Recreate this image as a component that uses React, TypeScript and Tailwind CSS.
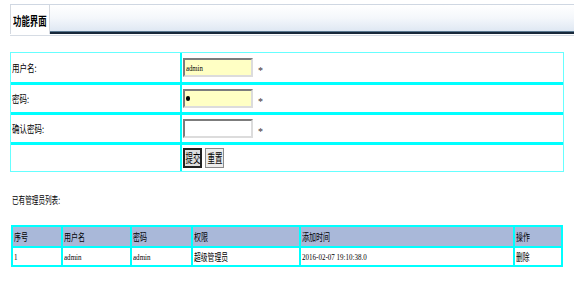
import React from 'react';

const cjk = { fontFamily: '"Noto Sans CJK SC", "Noto Sans", sans-serif' };
const serif = { fontFamily: '"Liberation Serif", "Noto Sans CJK SC", serif' };

function Sq({ children, className = '' }: { children: React.ReactNode; className?: string }) {
  return <span className={`inline-block whitespace-nowrap origin-left ${className}`}>{children}</span>;
}

function FieldInput({ value, filled, password }: { value: string; filled?: boolean; password?: boolean }) {
  return (
    <div className="flex items-end gap-[5px]">
      <div
        className={`flex h-[19px] w-[70px] items-center border-2 border-t-[#7c7c7c] border-l-[#7c7c7c] border-b-[#dcdcdc] border-r-[#dcdcdc] pl-[1px] ${
          filled ? 'bg-[#ffffc4]' : 'bg-white'
        }`}
      >
        {password ? (
          <span className="block h-[5px] w-[4px] rounded-full bg-black" />
        ) : (
          <Sq className="scale-x-[0.75] text-[9px] leading-none text-black">
            <span style={serif}>{value}</span>
          </Sq>
        )}
      </div>
      <span className="mb-[1px] text-[10px] leading-none text-[#333]" style={serif}>*</span>
    </div>
  );
}

const cols = [
  { w: 'w-[48px]', head: '序号' },
  { w: 'w-[69px]', head: '用户名' },
  { w: 'w-[61px]', head: '密码' },
  { w: 'w-[108px]', head: '权限' },
  { w: 'w-[214px]', head: '添加时间' },
  { w: 'w-[48px]', head: '操作' },
];

const row = ['1', 'admin', 'admin', '超级管理员', '2016-02-07 19:10:38.0', '删除'];

export default function App() {
  const formRows = [
    { label: '用户名:', field: <FieldInput value="admin" filled /> },
    { label: '密码:', field: <FieldInput value="" filled password /> },
    { label: '确认密码:', field: <FieldInput value="" /> },
  ];

  return (
    <div className="h-[290px] w-[574px] overflow-hidden bg-white text-black" style={cjk}>
      {/* Tab header */}
      <div className="ml-[10px] mt-[4px] border-t border-[#cfd7e2]">
        <div className="flex h-[29px]">
          <div className="flex w-[40px] items-center border-x border-[#d4d9e0] bg-white pl-[2px] pt-[3px]">
            <Sq className="scale-x-[0.7] text-[12px] font-bold leading-none">功能界面</Sq>
          </div>
          <div className="flex flex-1 flex-col">
            <div className="flex-1 bg-gradient-to-b from-white via-[#f4f7fb] to-[#dfe8f3]" />
            <div className="h-[1px] bg-[#5a7890]" />
            <div className="h-[2px] bg-[#18283a]" />
          </div>
        </div>
        <div className="h-[1px] bg-white" />
        <div className="h-[1px] bg-[#d6dce4]" />
      </div>

      {/* Form table */}
      <div className="ml-[10px] mt-[16px] w-[554px] border border-[#66ffff]">
        {formRows.map((r, i) => (
          <div
            key={r.label}
            className={`flex ${i === 0 ? 'h-[29px]' : 'h-[30px] border-t-[3px] border-[#00ffff]'}`}
          >
            <div className="flex w-[171px] items-center border-r-2 border-[#00ffff] pl-[1px]">
              <Sq className="scale-x-75 text-[10px] leading-none">{r.label}</Sq>
            </div>
            <div className="flex flex-1 items-center pl-[1px]">{r.field}</div>
          </div>
        ))}
        <div className="flex h-[29px] border-t-[3px] border-[#00ffff]">
          <div className="w-[171px] border-r-2 border-[#00ffff]" />
          <div className="flex flex-1 items-center gap-[3px] pl-[1px]">
            <button className="flex h-[20px] w-[19px] items-center justify-center border-2 border-[#222] bg-[#dedede] text-[12px] leading-none">
              <span className="inline-block scale-x-[0.62] whitespace-nowrap">提交</span>
            </button>
            <button className="flex h-[20px] w-[19px] items-center justify-center border border-[#8a8a8a] bg-[#ececec] text-[12px] leading-none">
              <span className="inline-block scale-x-[0.62] whitespace-nowrap">重置</span>
            </button>
          </div>
        </div>
      </div>

      {/* List title */}
      <div className="ml-[12px] mt-[23px] flex h-[10px] items-center">
        <Sq className="scale-x-[0.66] text-[10px] leading-none">已有管理员列表:</Sq>
      </div>

      {/* Admin list */}
      <div className="ml-[11px] mt-[20px] w-[552px] border-2 border-[#00ffff]">
        <div className="flex h-[19px] bg-[#a9b8d9]">
          {cols.map((c, i) => (
            <div
              key={c.head}
              className={`flex items-center pl-[1px] ${c.w} ${i > 0 ? 'border-l-2 border-[#00ffff]' : ''}`}
            >
              <Sq className="scale-x-[0.7] text-[10px] leading-none">{c.head}</Sq>
            </div>
          ))}
        </div>
        <div className="flex h-[19px] border-t-2 border-[#00ffff] bg-white">
          {cols.map((c, i) => {
            const v = row[i];
            const latin = /^[0-9a-z: .-]+$/.test(v);
            return (
              <div
                key={c.head}
                className={`flex items-center pl-[1px] ${c.w} ${i > 0 ? 'border-l-2 border-[#00ffff]' : ''}`}
              >
                {latin ? (
                  <Sq className="scale-x-[0.78] text-[9px] leading-none">
                    <span style={serif}>{v}</span>
                  </Sq>
                ) : (
                  <Sq className="scale-x-[0.68] text-[10px] leading-none">{v}</Sq>
                )}
              </div>
            );
          })}
        </div>
      </div>
    </div>
  );
}
